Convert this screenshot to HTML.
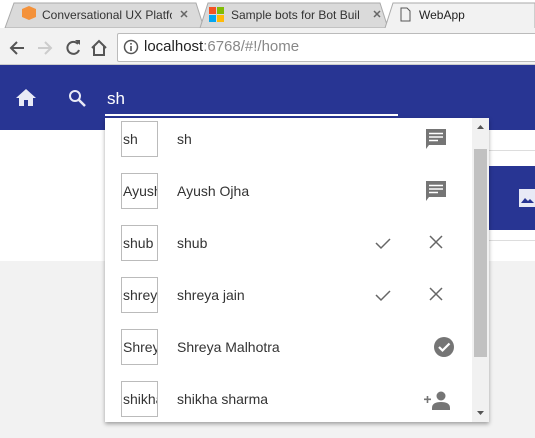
<!DOCTYPE html>
<html><head><style>
body{margin:0;width:535px;height:438px;overflow:hidden;position:relative;font-family:"Liberation Sans",sans-serif;background:#f2f2f2}
.a{position:absolute}
.row{position:absolute;left:0;width:367px;height:52px}
.av{position:absolute;left:16px;top:3px;width:34px;height:34px;border:1px solid #bbb;font-size:14px;line-height:34px;color:#333;overflow:hidden;white-space:nowrap;padding-left:1px;box-sizing:content-box}
.nm{position:absolute;left:72px;top:13px;font-size:14px;color:#333}
</style></head><body>
<div class="a" style="left:0;top:0;width:535px;height:28px;background:#fff"></div>
<svg class="a" style="left:0;top:0" width="535" height="30">
<path d="M5 28 L14 3 L196 3 L204 28 Z" fill="#dadada" stroke="#aaa"/>
<path d="M200 28 L208 3 L380 3 L388 28 Z" fill="#dadada" stroke="#aaa"/>
<path d="M385 28 L393 3 L535 3 L535 28" fill="#f2f2f2" stroke="#aaa"/>
<path d="M22 9 L29 6 L36 9 L36 17 L29 20 L22 17Z" fill="#f4923b"/>
<rect x="209" y="7" width="7" height="7" fill="#f35325"/><rect x="217" y="7" width="7" height="7" fill="#81bc06"/><rect x="209" y="15" width="7" height="7" fill="#05a6f0"/><rect x="217" y="15" width="7" height="7" fill="#ffba08"/>
<path d="M401 8 h6 l3 3 v10 h-9z" fill="none" stroke="#555"/>
<path d="M181 11 l6 6 M187 11 l-6 6 M374 11 l6 6 M380 11 l-6 6" stroke="#666" stroke-width="1.5"/>
</svg>
<div class="a" style="left:42px;top:8px;font-size:12px;color:#333;width:130px;overflow:hidden;white-space:nowrap">Conversational UX Platform</div>
<div class="a" style="left:231px;top:8px;font-size:12px;color:#333;width:128px;overflow:hidden;white-space:nowrap">Sample bots for Bot Builder</div>
<div class="a" style="left:419px;top:8px;font-size:12px;color:#222">WebApp</div>
<div class="a" style="left:0;top:28px;width:535px;height:37px;background:#f2f2f2;border-bottom:1px solid #ccc;box-sizing:border-box"></div>
<svg class="a" style="left:0;top:28px" width="120" height="37">
<path d="M24 20 h-13 M17 14 l-6 6 6 6" fill="none" stroke="#555" stroke-width="2"/>
<path d="M38 20 h13 M45 14 l6 6 -6 6" fill="none" stroke="#ccc" stroke-width="2"/>
<path d="M78 16 a6 6 0 1 0 1 6" fill="none" stroke="#555" stroke-width="2"/><path d="M75 12 l5 0 0 5z" fill="#555"/>
<path d="M92 20 l7 -7 7 7 M94 18 v9 h10 v-9" fill="none" stroke="#555" stroke-width="2"/>
</svg>
<div class="a" style="left:117px;top:33px;width:430px;height:27px;background:#fff;border:1px solid #bbb;border-radius:2px"></div>
<svg class="a" style="left:123px;top:39px" width="16" height="16"><circle cx="8" cy="8" r="6.5" fill="none" stroke="#555" stroke-width="1.5"/><rect x="7.2" y="7" width="1.6" height="5" fill="#555"/><rect x="7.2" y="4" width="1.6" height="1.6" fill="#555"/></svg>
<div class="a" style="left:144px;top:38px;font-size:15px;color:#222">localhost<span style="color:#888">:6768/#!/home</span></div>
<div class="a" style="left:0;top:65px;width:535px;height:65px;background:#283593"></div>
<svg class="a" style="left:16px;top:89px" width="20" height="18"><path d="M8 17v-6h4v6h5V9h3L10 0 0 9h3v8z" fill="#e8eaf6"/></svg>
<svg class="a" style="left:68px;top:89px" width="20" height="20"><circle cx="7" cy="7" r="5" fill="none" stroke="#e8eaf6" stroke-width="2"/><path d="M11 11 l6 6" stroke="#e8eaf6" stroke-width="2.5"/></svg>
<div class="a" style="left:107px;top:89px;font-size:17px;color:#fff">sh</div>
<div class="a" style="left:105px;top:114px;width:293px;height:2px;background:#fff"></div>
<div class="a" style="left:0;top:130px;width:535px;height:131px;background:#fff"></div>
<div class="a" style="left:489px;top:150px;width:46px;height:1px;background:#ddd"></div>
<div class="a" style="left:489px;top:166px;width:46px;height:64px;background:#283593"></div>
<div class="a" style="left:489px;top:240px;width:46px;height:1px;background:#ddd"></div>
<svg class="a" style="left:519px;top:189px" width="16" height="18"><rect width="16" height="18" fill="#e8eaf6"/><path d="M2 14 l4-5 3 3 2-2 4 4z" fill="#283593"/></svg>
<div class="a" style="left:105px;top:118px;width:384px;height:304px;background:#fff;box-shadow:0 2px 4px rgba(0,0,0,.35);overflow:hidden">
 <div class="a" style="left:367px;top:0;width:17px;height:304px;background:#f1f1f1"></div>
 <div class="a" style="left:369px;top:31px;width:13px;height:208px;background:#c1c1c1"></div>
 <svg class="a" style="left:367px;top:0" width="17" height="304"><path d="M5 11 l3.5-4 3.5 4z M5 293 l3.5 4 3.5-4z" fill="#555"/></svg>
 <div class="row" style="top:0"><div class="av">sh</div><div class="nm">sh</div></div>
 <div class="row" style="top:52px"><div class="av">Ayush</div><div class="nm">Ayush Ojha</div></div>
 <div class="row" style="top:104px"><div class="av">shub</div><div class="nm">shub</div></div>
 <div class="row" style="top:156px"><div class="av">shreya</div><div class="nm">shreya jain</div></div>
 <div class="row" style="top:208px"><div class="av">Shreya</div><div class="nm">Shreya Malhotra</div></div>
 <div class="row" style="top:260px"><div class="av">shikha</div><div class="nm">shikha sharma</div></div>
 <svg class="a" style="left:0;top:0" width="367" height="304">
  <g fill="#757575">
   <path d="M321 11 h20 v16 h-17 l-3 4z"/><path d="M321 63 h20 v16 h-17 l-3 4z"/>
  </g>
  <g stroke="#fff" stroke-width="1.6"><path d="M324 15.5h14M324 19h14M324 22.5h9M324 67.5h14M324 71h14M324 74.5h9"/></g>
  <g fill="none" stroke="#666" stroke-width="1.5">
   <path d="M271 125 l5 5 9-9 M271 177 l5 5 9-9"/>
   <path d="M325 118 l12 12 M337 118 l-12 12 M325 170 l12 12 M337 170 l-12 12"/>
  </g>
  <circle cx="339" cy="229" r="10" fill="#757575"/><path d="M334 229 l3.5 3.5 7-7" fill="none" stroke="#fff" stroke-width="2.2"/>
  <g fill="#757575"><circle cx="336" cy="278" r="4.5"/><path d="M327 290 q0-6 9-6 q9 0 9 6 v2 h-18z"/><path d="M319 280.5h7v1.6h-7z M321.7 278h1.6v7h-1.6z"/></g>
 </svg>
</div>
</body></html>
